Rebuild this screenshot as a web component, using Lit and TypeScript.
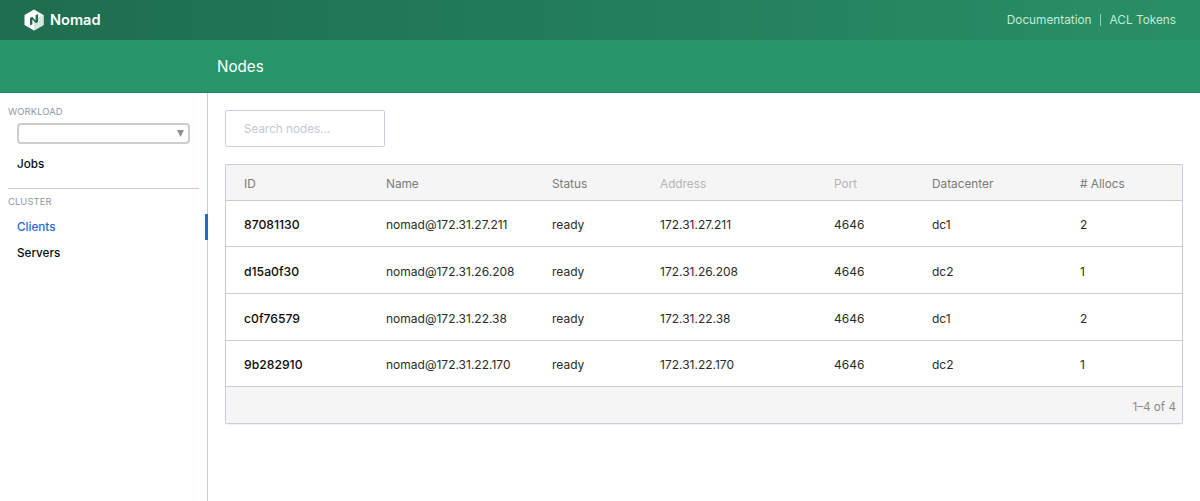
import { LitElement, html, css } from "lit";
import { customElement } from "lit/decorators.js";

const rows = [
  ["87081130", "nomad@172.31.27.211", "ready", "172.31.27.211", "4646", "dc1", "2"],
  ["d15a0f30", "nomad@172.31.26.208", "ready", "172.31.26.208", "4646", "dc2", "1"],
  ["c0f76579", "nomad@172.31.22.38", "ready", "172.31.22.38", "4646", "dc1", "2"],
  ["9b282910", "nomad@172.31.22.170", "ready", "172.31.22.170", "4646", "dc2", "1"],
];

@customElement("app-root")
export class AppRoot extends LitElement {
  static styles = css`
    :host { display: flex; flex-direction: column; height: 501px; overflow: hidden; background: #fff;
      font-family: Inter, "Liberation Sans", sans-serif; font-size: 12px; color: #0a0a0a; }
    .top { height: 40px; flex: none; display: flex; align-items: center; justify-content: space-between;
      padding: 0 24px; background: linear-gradient(90deg, #1e6d4e 0%, #217a58 40%, #298f67 100%); }
    .brand { display: flex; align-items: center; gap: 6px; color: #fff; font-size: 14.6px; font-weight: 600; }
    .links { display: flex; align-items: center; color: #c0ecd8; font-size: 11.8px; }
    .links span + span { margin-left: 8px; padding-left: 9px; border-left: 1px solid #8fd1b5; line-height: 12px; }
    .sub { height: 53px; flex: none; box-sizing: border-box; display: flex; align-items: center; padding-left: 217px;
      background: #279469; border-bottom: 1px solid #25825e; color: #fff; font-size: 15.2px; font-weight: 400; }
    .body { flex: 1; display: flex; min-height: 0; }
    .side { width: 208px; flex: none; box-sizing: border-box; border-right: 1px solid #c4cde0; padding-top: 13px; position: relative; }
    .label { font-size: 9.4px; color: #8e96a3; padding-left: 8px; letter-spacing: 0.1px; line-height: 12px; }
    .sel { margin: 5px 0 0 17px; width: 173px; height: 21px; box-sizing: border-box; border: 2px solid #cdcdcd; border-radius: 4px;
      display: flex; align-items: center; justify-content: flex-end; padding-right: 4px; }
    .sel svg { display: block; }
    .item { padding-left: 17px; font-size: 11.7px; font-weight: 500; line-height: 26px; height: 26px; }
    .jobs { margin-top: 7px; }
    .rule { margin: 11px 8px 0 8px; height: 1px; background: #c9ccd2; }
    .cluster { margin-top: 7px; }
    .clients { margin-top: 6px; color: #2767d8; position: relative; }
    .clients::after { content: ""; position: absolute; right: -1px; top: 0; width: 3px; height: 26px; background: #2767d8; }
    .main { flex: 1; padding: 17px 17px 0 17px; min-width: 0; }
    .search { width: 160px; height: 37px; box-sizing: border-box; border: 1px solid #c9d0dd; border-radius: 2px;
      display: flex; align-items: center; padding-left: 18px; color: #c4c9d2; font-size: 11.7px; }
    .wrap { margin-top: 17px; border: 1px solid #c6ccd8; border-radius: 2px; box-shadow: 0 1px 1px rgba(0,0,0,0.06); }
    table { width: 100%; border-collapse: collapse; table-layout: fixed; }
    th { height: 35px; background: #f5f5f5; border-bottom: 1px solid #c6ccd8; padding: 3px 0 0 18px; text-align: left;
      font-weight: 400; color: #7a7a7a; box-sizing: border-box; font-size: 11.8px; }
    th.dim { color: #b5b5b5; }
    td { height: 46.7px; padding: 3px 0 0 18px; border-bottom: 1px solid #c6ccd8; box-sizing: border-box; color: #2a2a2a; }
    td.id { font-weight: 500; color: #0a0a0a; font-size: 12.2px; }
    .foot { height: 36px; box-sizing: border-box; background: #f5f5f5; display: flex; align-items: center; justify-content: flex-end;
      padding: 4px 6px 0 0; color: #8a8a8a; font-size: 11.7px; }
  `;

  render() {
    return html`
      <div class="top">
        <div class="brand">
          <svg width="20" height="22" viewBox="0 0 20 22" aria-hidden="true">
            <path d="M10 0.5 L19.5 6 V16 L10 21.5 L0.5 16 V6 Z" fill="#fff" />
            <path d="M19.5 6 V16 L10 21.5 V11 Z" fill="#d5e8df" />
            <path d="M6 16.5 V9 L8.2 7.8 L11.6 11.4 V6.2 L14 5 V13 L11.8 14.2 L8.4 10.6 V15.2 Z" fill="#1f6f50" />
          </svg>
          <span>Nomad</span>
        </div>
        <div class="links"><span>Documentation</span><span>ACL Tokens</span></div>
      </div>
      <div class="sub">Nodes</div>
      <div class="body">
        <nav class="side">
          <div class="label">WORKLOAD</div>
          <div class="sel">
            <svg width="7" height="7" viewBox="0 0 7 7" aria-hidden="true"><path d="M0 0 H7 L3.5 7 Z" fill="#8f8f8f" /></svg>
          </div>
          <div class="item jobs">Jobs</div>
          <div class="rule"></div>
          <div class="label cluster">CLUSTER</div>
          <div class="item clients">Clients</div>
          <div class="item">Servers</div>
        </nav>
        <main class="main">
          <div class="search">Search nodes...</div>
          <div class="wrap">
            <table>
              <colgroup>
                <col style="width:142px" /><col style="width:166px" /><col style="width:108px" />
                <col style="width:174px" /><col style="width:98px" /><col style="width:148px" /><col />
              </colgroup>
              <thead>
                <tr>
                  <th>ID</th><th>Name</th><th>Status</th><th class="dim">Address</th>
                  <th class="dim">Port</th><th>Datacenter</th><th># Allocs</th>
                </tr>
              </thead>
              <tbody>
                ${rows.map(
                  (r) => html`<tr>${r.map((c, i) => html`<td class=${i === 0 ? "id" : ""}>${c}</td>`)}</tr>`
                )}
              </tbody>
            </table>
            <div class="foot">1–4 of 4</div>
          </div>
        </main>
      </div>
    `;
  }
}
